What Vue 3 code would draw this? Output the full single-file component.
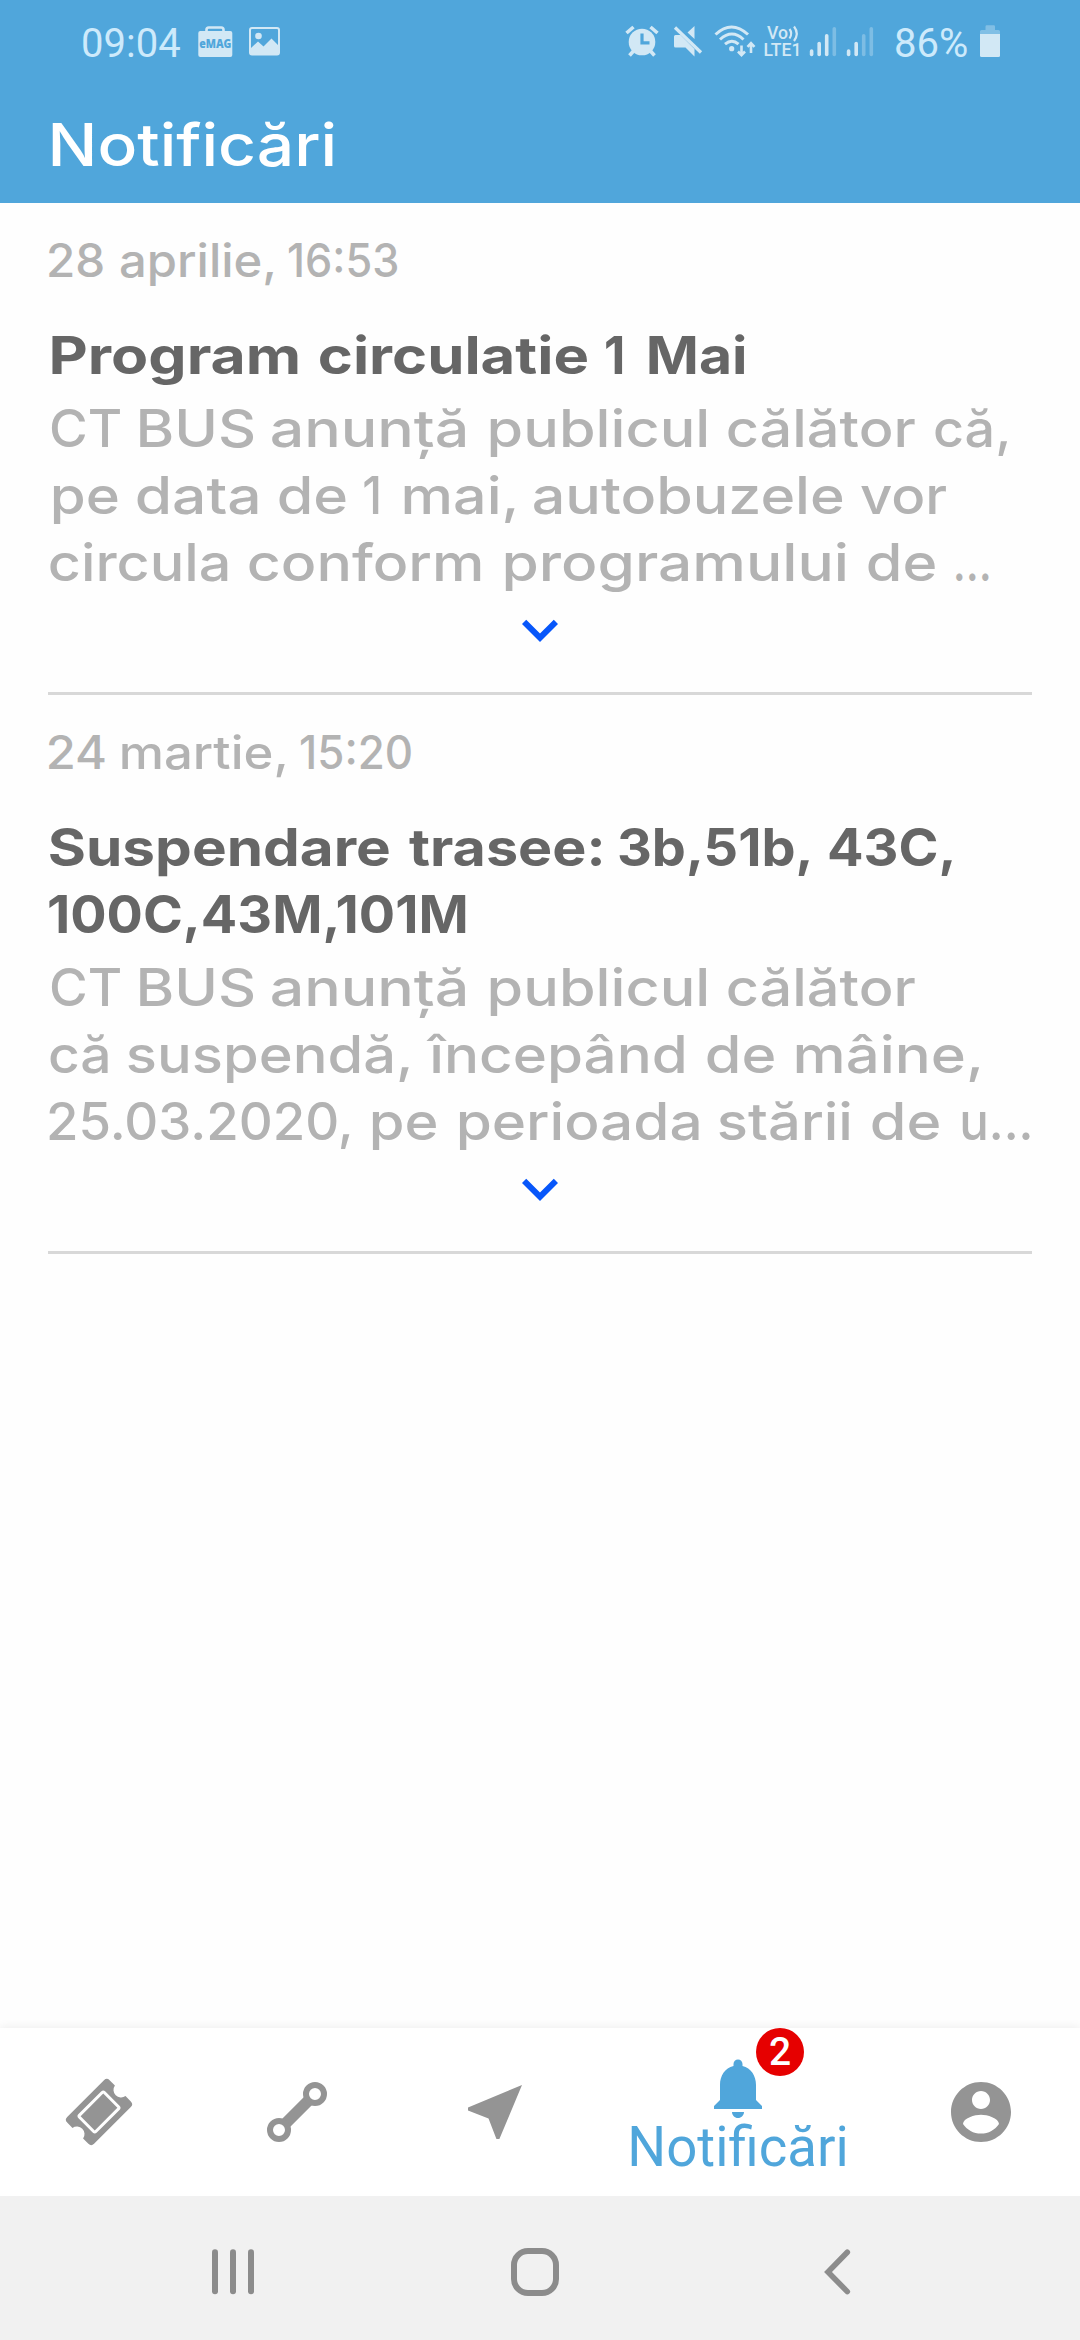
<script setup>
import { h } from 'vue'

// Each line is a list of [word, left edge, right edge] on the 1080px grid.
const heading = [['Notificări', 52, 334]]

const items = [
  {
    date: [['28', 49.2, 103.3], ['aprilie,', 119.8, 273.8], ['16:53', 289.3, 398]],
    title: [
      [['Program', 51.7, 298], ['circulatie', 319.6, 587.5], ['1', 606.5, 623.6], ['Mai', 648.8, 745]]
    ],
    body: [
      [['CT', 50.6, 119.8], ['BUS', 140.2, 253.4], ['anunță', 272.4, 465.6], ['publicul', 490, 706.7], ['călător', 727.7, 915.3], ['că,', 935, 1007.6]],
      [['pe', 52.7, 117.8], ['data', 137, 257.6], ['de', 279, 346.4], ['1', 364.3, 379], ['mai,', 403.6, 514.8], ['autobuzele', 534.4, 843.4], ['vor', 861, 947]],
      [['circula', 50, 227.6], ['conform', 249, 480.7], ['programului', 505, 846.5], ['de', 867.8, 935.3], ['...', 955.6, 988.4]]
    ]
  },
  {
    date: [['24', 49.2, 105], ['martie,', 122.2, 285.8], ['15:20', 301.3, 411.8]],
    title: [
      [['Suspendare', 50, 389.8], ['trasee:', 408.7, 601.6], ['3b,51b,', 619.2, 809.3], ['43C,', 828.6, 951.5]],
      [['100C,43M,101M', 48.8, 466]]
    ],
    body: [
      [['CT', 50.6, 119.8], ['BUS', 140.2, 253.4], ['anunță', 272.4, 465.6], ['publicul', 490, 706.7], ['călător', 727.7, 915.3]],
      [['că', 50, 107.8], ['suspendă,', 128.4, 409.8], ['începând', 426.3, 684.6], ['de', 707, 774.5], ['mâine,', 795.9, 979.7]],
      [['25.03.2020,', 49.2, 350.2], ['pe', 371.9, 436.6], ['perioada', 459, 698.7], ['stării', 719.4, 851], ['de', 872, 939.5], ['u...', 961.8, 1029.7]]
    ]
  }
]

const pen = document.createElement('canvas').getContext('2d')

// Scales a word horizontally so its glyphs span the requested width.
function fit(el, width) {
  const css = getComputedStyle(el)
  pen.font = `${css.fontWeight} ${css.fontSize} ${css.fontFamily}`
  const m = pen.measureText(el.textContent)
  const scale = width / (m.actualBoundingBoxLeft + m.actualBoundingBoxRight)
  el.style.transform = `translateX(${m.actualBoundingBoxLeft * scale}px) scaleX(${scale})`
}

const TextLine = ({ words }) =>
  h('div', { style: { display: 'flex', whiteSpace: 'pre', paddingLeft: `${words[0][1] - 48}px` } },
    words.map(([text, from, to], i) => {
      const next = words[i + 1]
      return h('span', { style: { flex: 'none', width: `${(next ? next[1] : to) - from}px` } }, [
        h('span', {
          style: { display: 'inline-block', transformOrigin: '0 50%' },
          onVnodeMounted: (node) => fit(node.el, to - from)
        }, text),
        next ? ' ' : null
      ])
    }))
TextLine.props = ['words']
</script>

<template>
  <div class="screen">
    <header class="top">
      <div class="status">
        <span class="clock">09:04</span>
        <svg class="emag" width="38" height="34" viewBox="197 24 38 34">
          <path fill="none" stroke="currentColor" stroke-width="2.6" d="M206.500 32v-2.200q0-2.300 2.300-2.300h12.400q2.300 0 2.300 2.300v2.200" />
          <rect x="198.300" y="31" width="34" height="26" rx="2" fill="currentColor" />
          <text x="199.300" y="48" textLength="32" lengthAdjust="spacingAndGlyphs" class="emag-text">eMAG</text>
        </svg>
        <svg class="photo" width="32" height="32" viewBox="249 25 32 32">
          <rect x="250" y="28" width="29" height="26.500" rx="2" fill="none" stroke="currentColor" stroke-width="2" />
          <circle cx="258.500" cy="36" r="3.300" fill="currentColor" />
          <path fill="currentColor" d="M251 48l7-6.500 5.500 5 8-8 7.500 7.500v9h-28z" />
        </svg>

        <svg class="alarm" width="34" height="34" viewBox="624 24 34 34">
          <circle cx="641" cy="42" r="13.300" fill="currentColor" />
          <path fill="none" stroke="currentColor" stroke-width="3.600" d="M625.500 33l7-6M656.500 33l-7-6M628.500 55.500l4-4.500M653.500 55.500l-4-4.500" />
          <path class="cut" stroke-width="3.200" d="M641 33.500v9.300h7.500" />
        </svg>
        <svg class="mute" width="32" height="34" viewBox="671 24 32 34">
          <path fill="currentColor" d="M673 36.500q0-1.500 1.500-1.500h5l14 14v7.500l-9-9h-10q-1.500 0-1.500-1.500zM693.500 26v13l-7-6.500z" />
          <path fill="none" stroke="currentColor" stroke-width="3.200" d="M674 27.500L700 52.500" />
        </svg>
        <svg class="wifi" width="42" height="34" viewBox="713 24 42 34">
          <g fill="none" stroke="currentColor" stroke-width="3">
            <path d="M714.500 34.500q16-15 32.500 0M719 39.500q12-11 23.500 0M724 44.200q7-6 13.500 0" />
            <path stroke-width="2.600" d="M740.500 45.500v9M737 51.500l3.500 3.600 3.500-3.600M750 53v-9M746.500 46.800l3.500-3.600 3.500 3.600" />
          </g>
          <circle cx="730.700" cy="48.700" r="2.600" fill="currentColor" />
        </svg>
        <svg class="volte" width="42" height="36" viewBox="761 23 42 36">
          <g fill="currentColor" class="volte-text">
            <text x="766" y="38.500" textLength="21" lengthAdjust="spacingAndGlyphs">Vo</text>
            <text x="762.500" y="56" textLength="38" lengthAdjust="spacingAndGlyphs">LTE1</text>
          </g>
          <path fill="none" stroke="currentColor" stroke-width="2.200" d="M788.500 29q3.400 4.300 0 9.500M793 26.500q5.500 7 0 14.500" />
        </svg>
        <svg class="bars" width="28" height="32" viewBox="807.500 25 28 32">
          <g fill="currentColor">
            <rect x="808.300" y="49.300" width="3.600" height="7" rx="1.800" />
            <rect x="815.900" y="41.700" width="3.600" height="14.600" rx="1.800" />
            <rect x="823.400" y="34" width="3.600" height="22.300" rx="1.800" />
            <rect x="831" y="27" width="3.600" height="29.300" rx="1.800" opacity=".35" />
          </g>
        </svg>
        <svg class="bars second" width="28" height="32" viewBox="807.500 25 28 32">
          <g fill="currentColor">
            <rect x="808.300" y="49.300" width="3.600" height="7" rx="1.800" />
            <rect x="815.900" y="41.700" width="3.600" height="14.600" rx="1.800" />
            <rect x="823.400" y="34" width="3.600" height="22.300" rx="1.800" opacity=".35" />
            <rect x="831" y="27" width="3.600" height="29.300" rx="1.800" opacity=".35" />
          </g>
        </svg>
        <span class="percent">86%</span>
        <svg class="battery" width="20" height="34" viewBox="979 24 20 34">
          <path fill="currentColor" opacity=".38" d="M984.500 30v-3.500q0-1.200 1.200-1.200h7.100q1.200 0 1.200 1.200V30h3.500q1.500 0 1.500 1.500V34h-20v-2.500q0-1.500 1.500-1.500z" />
          <path fill="currentColor" d="M979 34h20v21.500q0 1.500-1.500 1.500h-17q-1.500 0-1.500-1.500z" />
        </svg>
      </div>
      <h1 class="heading"><TextLine :words="heading" /></h1>
    </header>

    <main class="list">
      <article v-for="(item, n) in items" :key="n" class="item">
        <div class="date"><TextLine :words="item.date" /></div>
        <h2 class="title"><TextLine v-for="(l, i) in item.title" :key="i" :words="l" /></h2>
        <div class="body"><TextLine v-for="(l, i) in item.body" :key="i" :words="l" /></div>
        <svg class="more" width="36" height="27" viewBox="6 8 12 9">
          <path fill="#0756fa" d="M16.590 8.590L12 13.170 7.410 8.590 6 10l6 6 6-6z" />
        </svg>
      </article>
    </main>

    <nav class="tabs">
      <div class="tab">
        <svg width="72" height="72" viewBox="-36 -36 72 72">
          <g transform="rotate(-45)">
            <path fill="#949494" d="M-26-19H26Q30-19 30-15V-7.500A7.600 7.600 0 0 0 30 7.500V15Q30 19 26 19H-26Q-30 19-30 15V7.500A7.600 7.600 0 0 0-30-7.500V-15Q-30-19-26-19Z" />
            <rect x="-17.500" y="-11.500" width="35" height="23" rx="1.500" fill="none" stroke="#fff" stroke-width="3" />
          </g>
        </svg>
      </div>
      <div class="tab">
        <svg width="72" height="72" viewBox="261 2076 72 72">
          <path stroke="#949494" stroke-width="11.500" d="M284.500 2124.500l25-25" />
          <g fill="#fff" stroke="#949494" stroke-width="6">
            <circle cx="279" cy="2130" r="9" />
            <circle cx="315" cy="2094" r="9" />
          </g>
        </svg>
      </div>
      <div class="tab">
        <svg width="72" height="72" viewBox="0 0 24 24">
          <path fill="#949494" d="M21 3L3 10.530v.980l6.840 2.650L12.480 21h.980L21 3z" />
        </svg>
      </div>
      <div class="tab active">
        <div class="bell">
          <svg width="72" height="72" viewBox="0 0 24 24">
            <path fill="#50a6db" d="M12 22c1.100 0 2-.9 2-2h-4c0 1.100.890 2 2 2zm6-6v-5c0-3.070-1.640-5.640-4.500-6.320V4c0-.830-.670-1.500-1.500-1.500s-1.500.670-1.500 1.500v.680C7.630 5.360 6 7.920 6 11v5l-2 2v1h16v-1l-2-2z" />
          </svg>
          <span class="badge">2</span>
        </div>
        <span class="label">Notificări</span>
      </div>
      <div class="tab">
        <svg width="72" height="72" viewBox="0 0 24 24">
          <path fill="#949494" d="M12 2C6.480 2 2 6.480 2 12s4.480 10 10 10 10-4.480 10-10S17.520 2 12 2zm0 3c1.660 0 3 1.340 3 3s-1.340 3-3 3-3-1.340-3-3 1.340-3 3-3zm0 14.200c-2.500 0-4.710-1.280-6-3.220.030-1.990 4-3.080 6-3.080 1.990 0 5.970 1.090 6 3.080-1.290 1.940-3.500 3.220-6 3.220z" />
        </svg>
      </div>
    </nav>

    <footer class="system">
      <svg class="recents" width="42" height="48" viewBox="212 2248 42 48">
        <g fill="#8c8c8c">
          <rect x="212" y="2249.300" width="6" height="45" rx="3" />
          <rect x="230" y="2249.300" width="6" height="45" rx="3" />
          <rect x="248" y="2249.300" width="6" height="45" rx="3" />
        </g>
      </svg>
      <svg class="home" width="48" height="48" viewBox="0 0 48 48">
        <rect x="3" y="3" width="42" height="42" rx="14" fill="none" stroke="#8c8c8c" stroke-width="6" />
      </svg>
      <svg class="back" width="28" height="48" viewBox="823 2248 28 48">
        <path fill="none" stroke="#8c8c8c" stroke-width="5.600" stroke-linecap="round" d="M847.300 2252.200L828 2272l19.300 19.600" />
      </svg>
    </footer>
  </div>
</template>

<style>
body {
  margin: 0;
  background: #fefefe;
}
</style>

<style scoped>
.screen {
  display: flex;
  flex-direction: column;
  width: 1080px;
  height: 2340px;
  overflow: hidden;
  background: #fefefe;
  font-family: Inter, "Liberation Sans", sans-serif;
}
svg {
  display: block;
  flex: none;
}
.top {
  height: 203px;
  flex: none;
  background: #50a6db;
}
.status {
  display: flex;
  align-items: center;
  box-sizing: border-box;
  height: 84px;
  padding: 0 0 2px 81px;
  color: #d2e8f5;
}
.clock,
.percent {
  font-family: Roboto, sans-serif;
  font-size: 40px;
  line-height: 48px;
  color: #cdeafb;
  padding-top: 5px;
}
.clock {
  width: 116px;
  flex: none;
}
.emag-text {
  font: 900 13px "Noto Sans", sans-serif;
  fill: #50a6db;
}
.photo {
  margin-left: 14px;
}
.alarm {
  margin-left: 344px;
}
.cut {
  fill: none;
  stroke: #50a6db;
}
.mute {
  margin-left: 13px;
}
.wifi {
  margin-left: 10px;
}
.volte {
  margin-left: 6px;
}
.volte-text {
  font: 500 18px Roboto, sans-serif;
}
.bars {
  margin-left: 4.500px;
}
.second {
  margin-left: 9px;
}
.percent {
  width: 86px;
  margin-left: 20.500px;
  flex: none;
}
.heading {
  margin: 0;
  padding: 21px 0 0 48px;
  font-size: 59px;
  font-weight: 450;
  line-height: 80px;
  color: #fff;
}
.list {
  flex: 1;
  padding: 0 48px;
}
.item {
  display: flex;
  flex-direction: column;
  padding: 27px 0 47px;
  border-bottom: 3px solid #d8d8d8;
}
.date {
  font-size: 46px;
  font-weight: 450;
  line-height: 60px;
  color: #b3b3b3;
}
.title {
  margin: 32px 0 6px;
  font-size: 52px;
  font-weight: 700;
  line-height: 67px;
  color: #666;
}
.body {
  font-size: 52px;
  font-weight: 450;
  line-height: 67px;
  color: #b3b3b3;
}
.more {
  align-self: center;
  margin-top: 22px;
}
.tabs {
  display: flex;
  height: 168px;
  flex: none;
  background: #fff;
  box-shadow: 0 -1px 9px rgba(0, 0, 0, 0.07);
}
.tab {
  display: flex;
  flex-direction: column;
  align-items: center;
  justify-content: center;
  width: 198px;
}
.active {
  width: 288px;
  justify-content: flex-start;
}
.bell {
  position: relative;
  margin-top: 24px;
}
.badge {
  position: absolute;
  left: 54px;
  top: -24px;
  width: 48px;
  height: 48px;
  border-radius: 50%;
  background: #e60000;
  color: #fff;
  font: 500 39px/49px Roboto, sans-serif;
  text-align: center;
}
.label {
  margin-top: -10px;
  font: 400 54.600px/66px Roboto, sans-serif;
  color: #50a6db;
}
.system {
  display: flex;
  align-items: center;
  box-sizing: border-box;
  height: 144px;
  flex: none;
  padding-left: 212px;
  background: #f1f1f1;
}
.recents {
  margin-top: 8px;
}
.home {
  margin: 8px 0 0 257px;
}
.back {
  margin: 8px 0 0 264px;
}
</style>
